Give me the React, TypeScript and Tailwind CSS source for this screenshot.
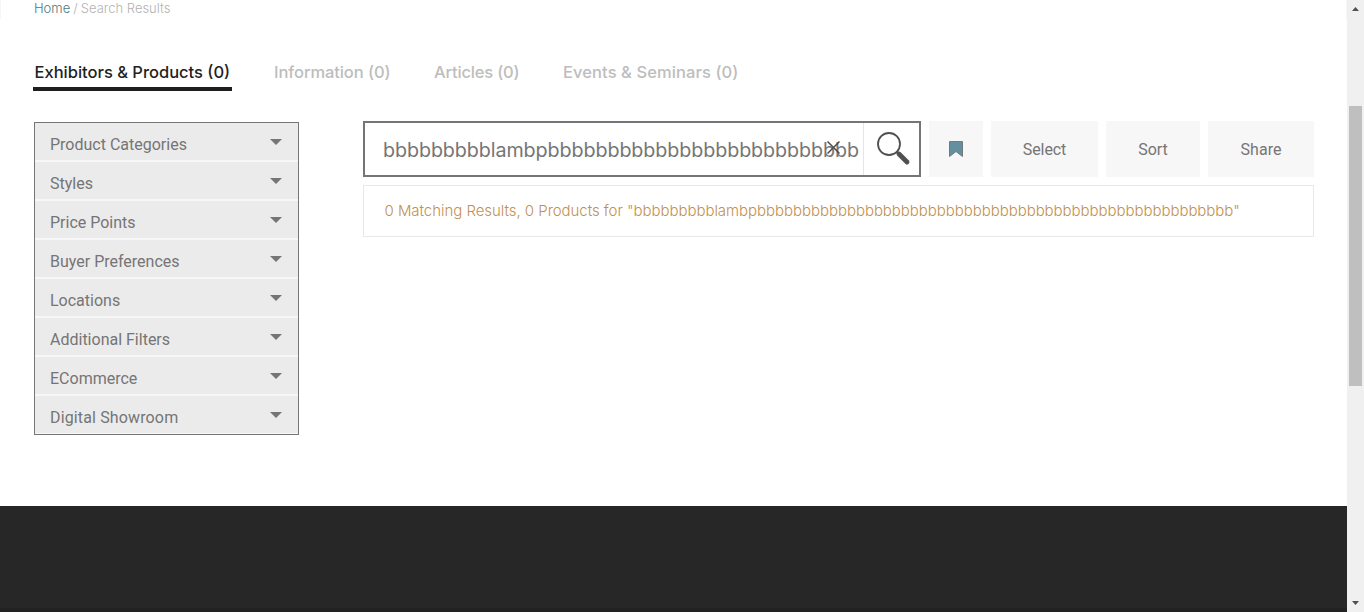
const filters = [
  "Product Categories",
  "Styles",
  "Price Points",
  "Buyer Preferences",
  "Locations",
  "Additional Filters",
  "ECommerce",
  "Digital Showroom",
];

const query = "bbbbbbbbblambp";
const fullQuery = query + "b".repeat(53);
const visibleQuery = query + "b".repeat(26);

function Breadcrumb() {
  return (
    <nav className="flex h-[19px] items-start border-x border-[#f5f5f5] pl-[33px] text-[13px] leading-4 font-light">
      <a className="text-[#497a82]">Home</a>
      <span className="ml-[3px] text-[#b3b3b3]">/</span>
      <span className="ml-[3px] text-[#b3b3b3]">Search Results</span>
    </nav>
  );
}

function Tabs() {
  return (
    <div className="mt-[42px] flex h-[30px] pl-[33px] text-[16.5px] leading-[22px] font-medium whitespace-nowrap text-[#bdbdbd]">
      <div className="w-[199px] border-b-4 border-[#1d1e20] pl-[1.5px] text-[#222]">Exhibitors &amp; Products (0)</div>
      <div className="ml-[42px] w-[160px] tracking-[-0.08px]">Information (0)</div>
      <div className="w-[129px] tracking-[-0.18px]">Articles (0)</div>
      <div className="tracking-[0.09px]">Events &amp; Seminars (0)</div>
    </div>
  );
}

function Sidebar() {
  return (
    <aside className="mt-px h-[313px] w-[265px] shrink-0 overflow-hidden border border-[#757575] font-[Roboto,sans-serif]">
      {filters.map((name) => (
        <div
          key={name}
          className="flex h-[39px] justify-between border-b-2 border-[#f7f7f7] bg-[#ebebeb] pr-4 pl-[15px] text-base leading-[43px] text-[#757575] last:tracking-[0.14px]"
        >
          <span>{name}</span>
          <svg className="mt-4 h-[6px] w-3" viewBox="0 0 12 6" fill="#757575">
            <path d="M0 0h12L6 6z" />
          </svg>
        </div>
      ))}
    </aside>
  );
}

function SearchBox() {
  return (
    <div className="relative flex h-14 w-[558px] border-2 border-[#757575]">
      <div className="w-[499px] shrink-0 border-r border-[#e5e5e5] pl-[18px] text-left text-[19.7px] leading-[54px] tracking-[-0.08px] whitespace-nowrap text-[#757575]">
        {visibleQuery}
      </div>
      <svg className="absolute top-[18px] left-[461.5px] size-[13px]" viewBox="0 0 13 13" fill="none" stroke="#4d4d4d" strokeWidth="1.5">
        <path d="M.5.5l12 12M12.5.5l-12 12" />
      </svg>
      <svg className="mt-[7px] ml-3 h-9 w-9" viewBox="0 0 36 36" fill="none" stroke="#505050">
        <circle cx="13" cy="14" r="11" strokeWidth="1.8" />
        <path d="M20.5 21.5l2.500 2.500" strokeWidth="2.5" />
        <path d="M23 24l8 8" strokeWidth="4.8" strokeLinecap="round" />
      </svg>
    </div>
  );
}

function Toolbar() {
  return (
    <div className="flex gap-2 text-center text-base leading-14 text-[#757575]">
      <SearchBox />
      <button className="flex w-[54px] items-center justify-center bg-[#f7f7f7]">
        <svg className="h-4 w-[14px]" viewBox="0 0 14 16">
          <path d="M.5.5h13v15L7 10.500l-6.500 5z" fill="#648fa0" stroke="#787878" />
        </svg>
      </button>
      <button className="w-[107px] bg-[#f7f7f7] pt-0.5 font-[Roboto,sans-serif] leading-[54px] tracking-[-0.1px]">Select</button>
      <button className="w-[94px] bg-[#f7f7f7] pt-0.5 font-[Roboto,sans-serif] leading-[54px]">Sort</button>
      <button className="w-[106px] bg-[#f7f7f7] pt-0.5 font-[Roboto,sans-serif] leading-[54px]">Share</button>
    </div>
  );
}

function Scrollbar() {
  return (
    <div className="flex w-[17px] flex-col items-center bg-[#f0f0f0]">
      <svg className="mt-[7px] h-1 w-[7px]" viewBox="0 0 7 4" fill="#505050">
        <path d="M0 4h7L3.500 0z" />
      </svg>
      <div className="mt-[95px] h-[280px] w-[13px] bg-[#bfbfbf]" />
      <svg className="mt-auto mb-[7px] h-1 w-[7px]" viewBox="0 0 7 4" fill="#505050">
        <path d="M0 0h7L3.500 4z" />
      </svg>
    </div>
  );
}

export default function App() {
  return (
    <div className="flex h-[612px] w-[1364px] overflow-hidden bg-white font-[Inter,sans-serif]">
      <div className="flex w-[1347px] flex-col">
        <Breadcrumb />
        <Tabs />
        <main className="mt-[30px] flex gap-16 pl-[34px]">
          <Sidebar />
          <section className="w-[951px]">
            <Toolbar />
            <div className="mt-2 h-[52px] border border-[#e8e8e8] pl-[20.5px] text-[15px] leading-[50px] font-light tracking-[-0.045px] whitespace-nowrap text-[#bf9150]">
              0 Matching Results, 0 Products for "{fullQuery}"
            </div>
          </section>
        </main>
        <footer className="mt-auto h-[106px] border-b-4 border-[#222] bg-[#272727]" />
      </div>
      <Scrollbar />
    </div>
  );
}
